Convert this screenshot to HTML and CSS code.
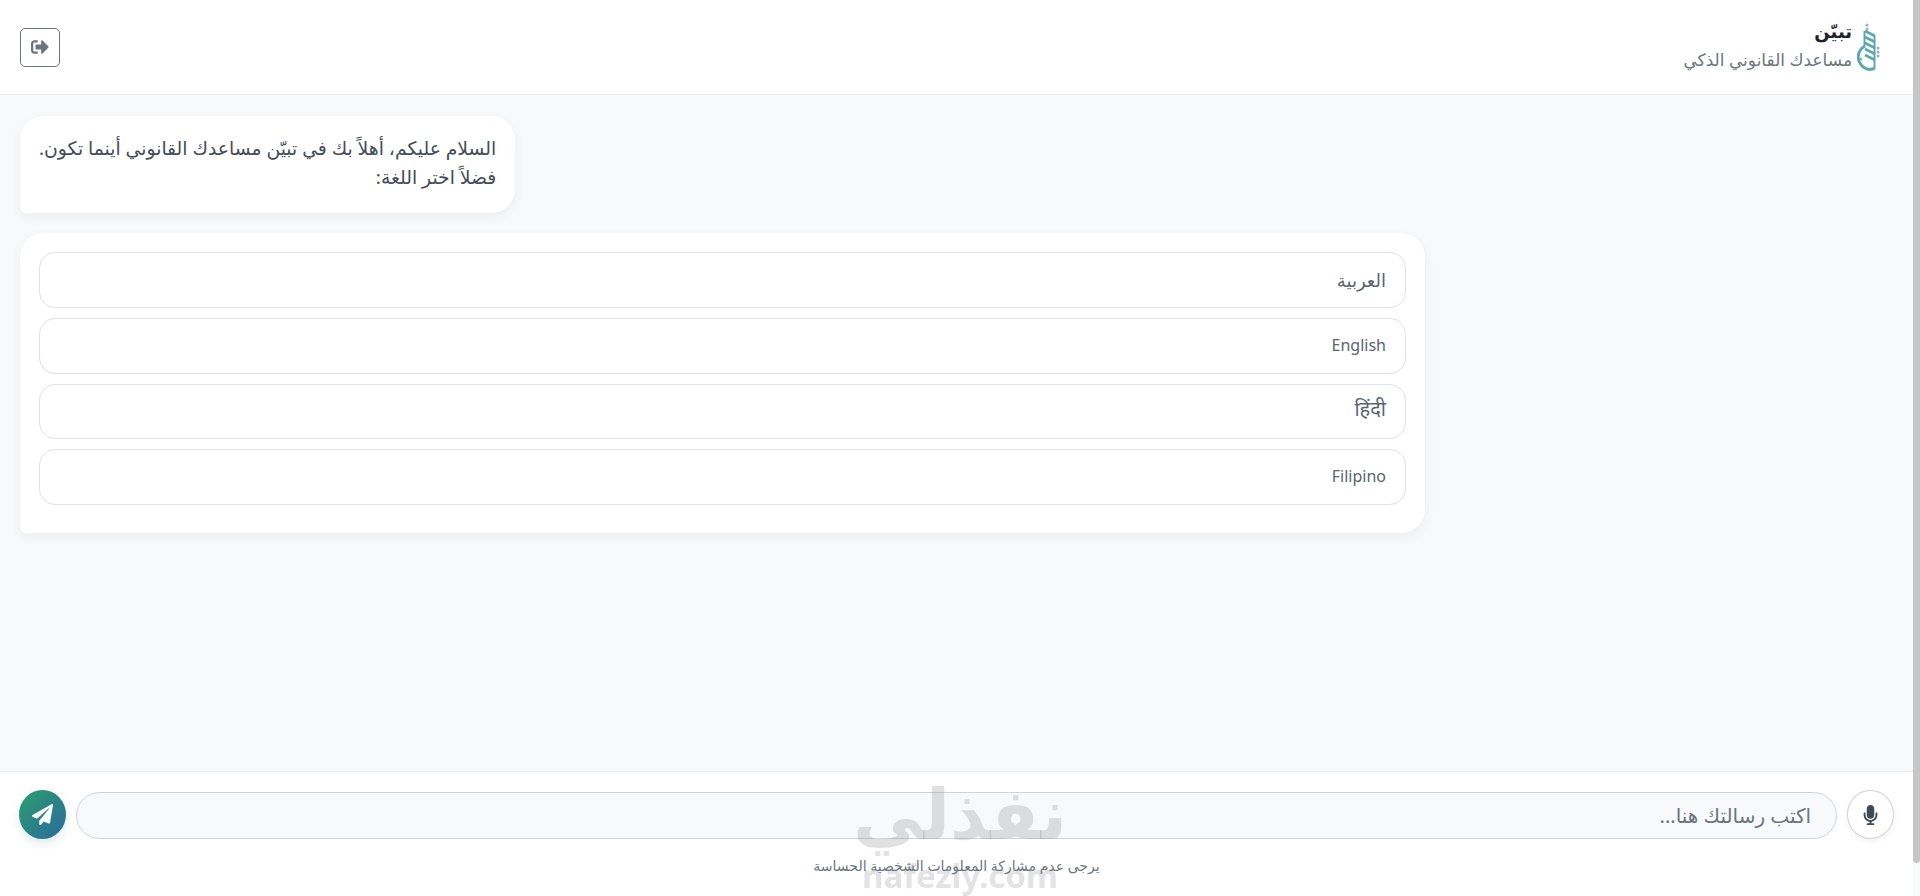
FILE: index.html
```html
<!DOCTYPE html>
<html lang="ar" dir="rtl">
<head>
    <meta charset="UTF-8">
    <meta name="viewport" content="width=device-width, initial-scale=1.0">
    <title>تبيّن</title>
    <link rel="stylesheet" href="styles.css">
</head>
<body>
<div class="page">
    <div class="scrollbar"><div class="scrollbar-thumb"></div></div>

    <div class="app">
        <header class="topbar">
            <div class="brand">
                <svg class="logo" viewBox="0 0 28 50" aria-hidden="true">
                    <g fill="#a3acb0">
                        <circle cx="10" cy="3" r="1.5"/>
                        <circle cx="10" cy="7" r="1.5"/>
                        <circle cx="21" cy="26" r="1.5"/>
                        <circle cx="21" cy="30" r="1.5"/>
                        <circle cx="21" cy="34" r="1.5"/>
                        <circle cx="4" cy="37" r="1.5"/>
                    </g>
                    <g fill="none" stroke="#5aa9b0">
                        <path stroke-width="2.6" d="M8 9 L18 14"/>
                        <path stroke-width="2.6" d="M8 15 L18 20"/>
                        <path stroke-width="2.6" d="M8 21 L18 26"/>
                        <path stroke-width="2.6" d="M8 27 L18 32"/>
                        <path stroke-width="2.6" d="M8 33 L18 38"/>
                        <path stroke-width="2" d="M7.5 9 L7.5 24"/>
                        <path stroke-width="2" d="M17.5 14 L17.5 46"/>
                        <path stroke-width="3" d="M8 24 C2 27 0 34 2 39 C5 47 13 49 18 46"/>
                    </g>
                </svg>
                <div class="brand-text">
                    <div class="brand-title">تبيّن</div>
                    <div class="brand-sub">مساعدك القانوني الذكي</div>
                </div>
            </div>
            <button class="logout" type="button" aria-label="خروج">
                <svg viewBox="0 0 512 512"><path d="M497 273L329 441c-15 15-41 4.5-41-17v-96H152c-13.3 0-24-10.7-24-24v-96c0-13.3 10.7-24 24-24h136V88c0-21.4 25.9-32 41-17l168 168c9.3 9.4 9.3 24.6 0 34zM192 436v-40c0-6.6-5.4-12-12-12H96c-17.7 0-32-14.3-32-32V160c0-17.7 14.3-32 32-32h84c6.6 0 12-5.4 12-12V76c0-6.6-5.4-12-12-12H96c-53 0-96 43-96 96v192c0 53 43 96 96 96h84c6.6 0 12-5.4 12-12z"/></svg>
            </button>
        </header>

        <main class="chat">
            <div class="bubble">
                السلام عليكم، أهلاً بك في تبيّن مساعدك القانوني أينما تكون.<br>
                فضلاً اختر اللغة:
            </div>
            <div class="options">
                <button class="option option-ar" type="button">العربية</button>
                <button class="option" type="button">English</button>
                <button class="option option-hi" type="button">हिंदी</button>
                <button class="option" type="button">Filipino</button>
            </div>
        </main>

        <footer class="composer">
            <div class="composer-row">
                <button class="mic" type="button" aria-label="تسجيل">
                    <svg viewBox="0 0 352 512"><path d="M176 352c53.02 0 96-42.98 96-96V96c0-53.02-42.98-96-96-96S80 42.98 80 96v160c0 53.02 42.98 96 96 96zm160-160h-16c-8.84 0-16 7.16-16 16v48c0 74.8-64.49 134.82-140.79 127.38C96.71 376.89 48 317.11 48 250.3V208c0-8.84-7.16-16-16-16H16c-8.84 0-16 7.16-16 16v40.16c0 89.64 63.97 169.55 152 181.69V464H96c-8.84 0-16 7.16-16 16v16c0 8.84 7.16 16 16 16h160c8.84 0 16-7.16 16-16v-16c0-8.84-7.16-16-16-16h-56v-33.77C285.71 418.47 352 344.9 352 256v-48c0-8.84-7.16-16-16-16z"/></svg>
                </button>
                <input class="message" placeholder="اكتب رسالتك هنا...">
                <button class="send" type="button" aria-label="إرسال">
                    <svg viewBox="0 0 512 512"><path d="M476 3.2L12.5 270.6c-18.1 10.4-15.8 35.6 2.2 43.2L121 358.4l287.3-253.2c5.5-4.9 13.3 2.6 8.6 8.3L176 407v80.5c0 23.6 28.5 32.9 42.5 15.8L282 426l124.6 52.2c14.2 6 30.4-2.9 33-18.2l72-432C515 7.8 493.3-6.8 476 3.2z"/></svg>
                </button>
            </div>
            <div class="notice">يرجى عدم مشاركة المعلومات الشخصية الحساسة</div>
        </footer>
    </div>

    <div class="watermark">
        <div class="watermark-ar">نفذلي</div>
        <div class="watermark-en">nafezly.com</div>
    </div>
</div>
</body>
</html>
```

FILE: styles.css
```css
* {
    margin: 0;
    padding: 0;
    box-sizing: border-box;
}

html, body {
    width: 100%;
    height: 100%;
    overflow: hidden;
}

body {
    font-family: "Noto Sans", "DejaVu Sans", sans-serif;
    color: #212529;
    background: #f8f9fa;
}

.page {
    position: relative;
    display: flex;
    height: 100%;
    overflow: hidden;
}

.scrollbar {
    flex: none;
    width: 7px;
    background: #f8f9fa;
}

.scrollbar-thumb {
    height: 863px;
    background: #c6c6c6;
    border-radius: 0 0 4px 4px;
}

.app {
    flex: 1;
    display: flex;
    flex-direction: column;
    height: 930px;
}

.topbar {
    display: flex;
    justify-content: space-between;
    align-items: center;
    height: 95px;
    padding: 0 28px 0 20px;
    background: #fff;
    border-bottom: 1px solid #e9ecef;
}

.brand {
    display: flex;
    align-items: center;
    gap: 5px;
}

.logo {
    width: 28px;
    height: 50px;
}

.brand-text {
    margin-top: -3px;
}

.brand-title {
    font-size: 18px;
    font-weight: 700;
    line-height: 26px;
    color: #1c2230;
}

.brand-sub {
    margin-top: 2px;
    font-size: 17px;
    line-height: 28px;
    color: #6c757d;
}

.logout {
    display: flex;
    align-items: center;
    justify-content: center;
    width: 40px;
    height: 39px;
    background: #fff;
    border: 1px solid #6c757d;
    border-radius: 5px;
}

.logout svg {
    width: 18px;
    height: 18px;
    fill: #6c757d;
}

.chat {
    flex: 1;
    display: flex;
    flex-direction: column;
    align-items: flex-end;
    gap: 20px;
    padding: 21px 0 0 20px;
}

.bubble {
    padding: 18px 19px 21px;
    font-size: 18.8px;
    line-height: 29px;
    color: #444c58;
    background: #fff;
    border-radius: 24px 24px 24px 6px;
    box-shadow: 0 4px 12px rgba(0, 0, 0, 0.05);
}

.options {
    display: flex;
    flex-direction: column;
    gap: 10px;
    width: 1405px;
    padding: 19px 19px 28px 19px;
    background: #fff;
    border-radius: 24px 24px 24px 6px;
    box-shadow: 0 4px 12px rgba(0, 0, 0, 0.05);
}

.option {
    height: 55.75px;
    padding: 0 19px 2px;
    font-family: inherit;
    font-size: 16px;
    text-align: right;
    color: #5a6470;
    background: #fff;
    border: 1px solid #dee2e6;
    border-radius: 16px;
}

.option-ar {
    padding-bottom: 0;
    font-size: 18px;
}

.option-hi {
    padding-bottom: 6px;
    font-size: 20px;
}

.composer {
    height: 159px;
    padding: 18px 19px 0;
    background: #fff;
    border-top: 1px solid #e9ecef;
}

.composer-row {
    display: flex;
    align-items: center;
    gap: 10px;
}

.mic, .send {
    flex: none;
    display: flex;
    align-items: center;
    justify-content: center;
    width: 47px;
    height: 49px;
    border-radius: 50%;
}

.mic {
    background: #fff;
    border: 1px solid #ced4da;
    box-shadow: 0 2px 6px rgba(0, 0, 0, 0.06);
}

.mic svg {
    width: 15px;
    height: 20px;
    fill: #3f4a58;
}

.send {
    border: 0;
    background: linear-gradient(135deg, #2b9e6b, #2b6a9e);
    box-shadow: 0 4px 10px rgba(43, 130, 130, 0.15);
}

.send svg {
    width: 21px;
    height: 21px;
    fill: #fff;
}

.message {
    flex: 1;
    height: 47px;
    margin-top: 2px;
    padding: 0 25px;
    font-family: inherit;
    font-size: 20px;
    background: #f8f9fa;
    border: 1px solid #ced4da;
    border-radius: 24px;
    outline: none;
}

.message::placeholder {
    color: #6c757d;
}

.notice {
    margin-top: 17px;
    font-size: 14px;
    line-height: 20px;
    text-align: center;
    color: #6c757d;
}

.watermark {
    position: absolute;
    top: 776px;
    left: 850px;
    width: 220px;
    text-align: center;
    color: rgba(130, 130, 130, 0.24);
    pointer-events: none;
}

.watermark-ar {
    font-size: 70px;
    font-weight: 700;
    line-height: 72px;
}

.watermark-en {
    margin-top: 12px;
    font-size: 33px;
    font-weight: 700;
    line-height: 32px;
}
```
